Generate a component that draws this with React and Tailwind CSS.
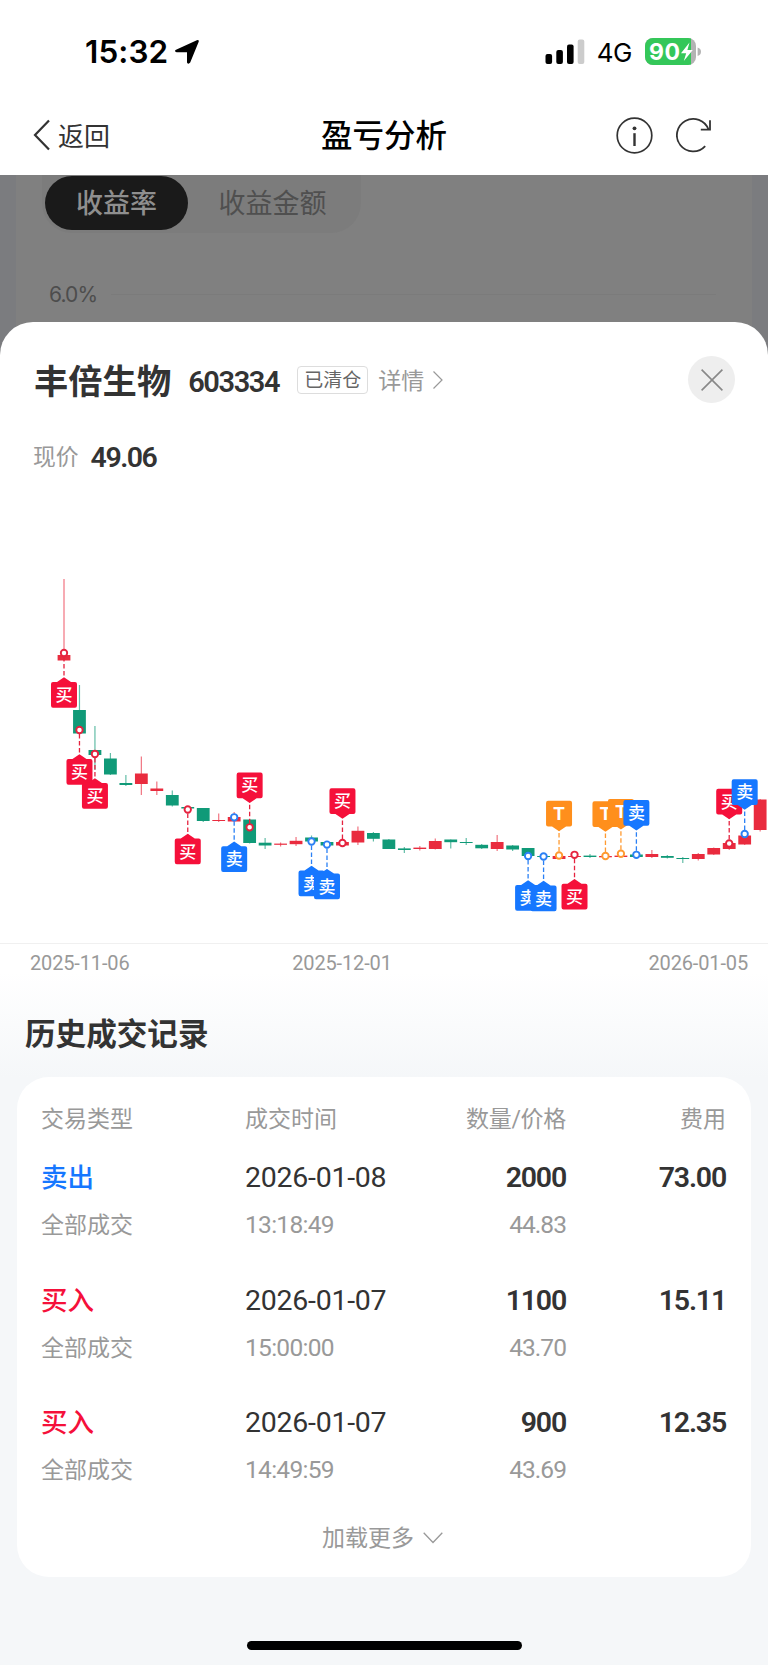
const RED = "#e92b3e";
const GREEN = "#109a78";

const STEP = 15.47;
const candleX = (i) => 64 + i * STEP;

// [color, bodyTop, bodyBottom, high, low]
const CANDLES = [
  ["r", 95, 100.5, 19, 100.5],
  ["g", 150, 173.5, 125, 173.5],
  ["g", 190, 195, 166, 210],
  ["g", 198.5, 214.5, 193, 215],
  ["g", 223, 225, 215, 226],
  ["r", 213.5, 224, 196.5, 235],
  ["r", 228.5, 231, 221.5, 235],
  ["g", 235, 245.5, 230.5, 246.5],
  ["g", 247, 248.5, 247, 249],
  ["g", 248, 261, 248, 262],
  ["r", 260, 261, 253.5, 262],
  ["r", 257, 261.5, 252, 261.5],
  ["g", 259.5, 283, 259, 283.5],
  ["g", 282.7, 285.5, 278, 289],
  ["r", 283.6, 284.8, 282.5, 286.5],
  ["r", 280.8, 284.2, 277, 286],
  ["g", 277.5, 281.5, 275.5, 282],
  ["g", 282, 285.5, 281, 286],
  ["r", 282, 285.5, 281, 286],
  ["r", 270.8, 282.5, 266.5, 285],
  ["g", 273, 278.8, 272, 281.5],
  ["g", 279.5, 289, 279, 289],
  ["g", 288.4, 290, 287, 293],
  ["r", 287.6, 289, 286, 290.5],
  ["r", 281, 289, 278.5, 289.5],
  ["g", 279.5, 282.2, 279.5, 288.5],
  ["g", 282, 283, 278, 285],
  ["g", 284.8, 288.3, 284, 289],
  ["r", 282, 289, 275, 291],
  ["g", 285.5, 289.5, 285, 291],
  ["g", 288, 296, 288, 296],
  ["g", 296, 297, 295, 298],
  ["r", 296, 299, 295, 299],
  ["r", 296, 297, 295, 298],
  ["g", 295.6, 297, 294, 298],
  ["r", 296, 297.3, 295, 298],
  ["r", 295.6, 297, 294, 298],
  ["g", 294.5, 297, 294, 298],
  ["r", 294, 297, 290, 298],
  ["g", 296, 297.8, 295, 298.5],
  ["g", 298, 299, 297, 303],
  ["r", 294, 299, 293, 300.5],
  ["r", 288, 294.5, 287.5, 295],
  ["r", 283, 289, 282.5, 290],
  ["r", 275.5, 284.5, 275, 285],
  ["r", 239.5, 270, 239, 271.5],
];

const MARKS = {
  buy: { label: "买", fill: "#f5103a", line: "#e5233f" },
  sell: { label: "卖", fill: "#1677ff", line: "#2b80f5" },
  t: { label: "T", fill: "#ff8f1c", line: "#ff9a30" },
};

const TRADES = [
  { i: 0, y: 93, type: "buy" },
  { i: 1, y: 170, type: "buy" },
  { i: 2, y: 194, type: "buy" },
  { i: 8, y: 249.5, type: "buy" },
  { i: 11, y: 257.3, type: "sell" },
  { i: 12, y: 267.3, type: "buy", up: true },
  { i: 16, y: 281.5, type: "sell" },
  { i: 17, y: 284.6, type: "sell" },
  { i: 18, y: 283, type: "buy", up: true },
  { i: 30, y: 296, type: "sell" },
  { i: 31, y: 296.5, type: "sell" },
  { i: 32, y: 295.5, type: "t", up: true },
  { i: 33, y: 294.8, type: "buy" },
  { i: 35, y: 296, type: "t", up: true },
  { i: 36, y: 293.7, type: "t", up: true },
  { i: 37, y: 294.8, type: "sell", up: true },
  { i: 43, y: 283.5, type: "buy", up: true },
  { i: 44, y: 274, type: "sell", up: true },
];

const RECORDS = [
  { side: "sell", name: "卖出", date: "2026-01-08", time: "13:18:49", qty: "2000", price: "44.83", fee: "73.00" },
  { side: "buy", name: "买入", date: "2026-01-07", time: "15:00:00", qty: "1100", price: "43.70", fee: "15.11" },
  { side: "buy", name: "买入", date: "2026-01-07", time: "14:49:59", qty: "900", price: "43.69", fee: "12.35" },
];

function StatusBar() {
  return (
    <div className="flex h-[95px] items-center justify-between pl-[85px] pr-[67px] pt-[9px]">
      <div className="flex items-center gap-[6px]">
        <span className="font-['Inter',sans-serif] text-[31.5px] font-semibold leading-none tracking-[0.1px]">15:32</span>
        <svg width="26" height="26" viewBox="0 0 26 26">
          <path d="M2 10.8 22.8 1.2Q25.4.4 24.6 3L16.2 23.6Q14.3 26 13 23.4V13.2H2.6Q-.2 12.2 2 10.8Z" fill="#000" />
        </svg>
      </div>
      <div className="flex items-center">
        <svg width="40" height="26" viewBox="0 0 40 26">
          <rect x="0.5" y="15" width="6.6" height="10" rx="2" />
          <rect x="11.3" y="11" width="6.6" height="14" rx="2" />
          <rect x="22" y="5.6" width="6.6" height="19.4" rx="2" />
          <rect x="32.7" y="0.4" width="6.6" height="24.6" rx="2" fill="#cccccc" />
        </svg>
        <span className="ml-[12px] mt-[2px] font-['Inter',sans-serif] text-[26px] leading-none tracking-[-0.5px]">4G</span>
        <svg className="ml-[13px]" width="56" height="28" viewBox="0 0 56 28">
          <defs>
            <clipPath id="battery">
              <rect width="51" height="27" rx="8" />
            </clipPath>
          </defs>
          <g clipPath="url(#battery)">
            <rect width="51" height="27" fill="#b3b3b3" />
            <rect width="46" height="27" fill="#34c759" />
          </g>
          <path d="M52.6 9.5Q56 10.5 56 13.8T52.6 18Z" fill="#b3b3b3" />
          <text x="4" y="22" fontSize="23" fontWeight="700" fill="#fff" fontFamily="Inter, sans-serif" textLength="31">90</text>
          <path d="M44.5 4.5 36 15.3H41.2L38.8 23 47.8 12H42.4Z" fill="#fff" />
        </svg>
      </div>
    </div>
  );
}

function NavBar() {
  return (
    <div className="grid h-20 grid-cols-3 items-center pl-[33px] pr-[56px] text-[#333]">
      <div className="flex items-center gap-[7px]">
        <svg width="18" height="32" viewBox="0 0 18 32" fill="none" stroke="#333" strokeWidth="2.2">
          <path d="M16 1.5 2 16 16 30.5" />
        </svg>
        <span className="pt-[3px] text-[26px] leading-none">返回</span>
      </div>
      <h1 className="-mr-[23px] pt-[4px] text-center text-[31.5px] font-medium leading-none text-black">盈亏分析</h1>
      <div className="flex items-center justify-end gap-[23px]">
        <svg width="37" height="37" viewBox="0 0 37 37" fill="none" stroke="#333">
          <circle cx="18.5" cy="18.5" r="17.3" strokeWidth="1.7" />
          <circle cx="18.5" cy="11.3" r="1.9" fill="#333" stroke="none" />
          <path d="M18.5 16.2V29" strokeWidth="2.4" />
        </svg>
        <svg width="36" height="37" viewBox="0 0 36 37" fill="none" stroke="#333" strokeWidth="1.8">
          <path d="M29.2 29.2A16.3 16.3 0 1 1 32.5 12.5" />
          <path d="M34 3.3V12.6H24.8" />
        </svg>
      </div>
    </div>
  );
}

function Backdrop() {
  return (
    <div className="h-[187px] bg-[#7b7c7f] px-4">
      <div className="h-full bg-[#808080] px-[26px]">
        <div className="flex h-[58px] w-[319px] rounded-b-[30px] bg-[#7c7c7c] pb-[4px] pl-[3px] pt-[1px]">
          <div className="flex h-[54px] w-[143px] items-center justify-center rounded-full bg-[#1a1a1a] pt-[3px] text-[27px] font-medium text-[#8f8f8f]">
            收益率
          </div>
          <div className="flex h-[54px] w-[169px] items-center justify-center pt-[3px] text-[27px] text-[#4f4f4f]">收益金额</div>
        </div>
        <div className="mt-[50px] flex items-center pl-[7px] pr-[10px]">
          <span className="w-[62px] pt-px font-['Inter',sans-serif] text-[21px] leading-[22px] tracking-[-0.9px] text-[#4d4d4d]">6.0%</span>
          <div className="mb-[1px] h-px flex-1 bg-[#7b7b7b]" />
        </div>
      </div>
    </div>
  );
}

function TradeMark({ i, y, type, up }) {
  const mark = MARKS[type];
  const s = up ? -1 : 1;
  return (
    <g transform={`translate(${candleX(i)} ${y})`}>
      <line y1={s * 4} y2={s * 26} stroke={mark.line} strokeWidth="1.3" strokeDasharray="4.5 2.5" />
      <path
        transform={`scale(1 ${s})`}
        d="M0 24.3 7 29H11Q13 29 13 31V52.5Q13 54.7 11 54.7H-11Q-13 54.7-13 52.5V31Q-13 29-11 29H-7Z"
        fill={mark.fill}
      />
      <text
        y={s * 42 + 6}
        textAnchor="middle"
        fontSize={type === "t" ? 18.5 : 17}
        fontWeight={type === "t" ? 700 : 500}
        fill="#fff"
      >
        {mark.label}
      </text>
      <circle r="3.2" fill="#fff" stroke={mark.line} strokeWidth="1.9" />
    </g>
  );
}

function KlineChart() {
  return (
    <svg className="block" width="768" height="383" viewBox="0 0 768 383">
      {CANDLES.map(([c, top, bottom, high, low], i) => {
        const color = c === "r" ? RED : GREEN;
        return (
          <g key={i} fill={color}>
            <rect x={candleX(i) - 0.6} y={high} width="1.2" height={low - high} opacity="0.65" />
            <rect x={candleX(i) - 6.4} y={top} width="12.8" height={bottom - top} />
          </g>
        );
      })}
      {TRADES.map((t) => (
        <TradeMark key={t.i} {...t} />
      ))}
    </svg>
  );
}

function SheetHeader() {
  return (
    <div className="pl-[34px] pr-[33px] pt-[34px]">
      <div className="flex h-[47px] items-center">
        <h2 className="pt-[5px] text-[34.3px] font-bold leading-none">丰倍生物</h2>
        <span className="ml-[17px] mt-[5px] text-[29px] font-semibold leading-none tracking-[-1.4px]">603334</span>
        <span className="ml-[18px] flex h-[28px] w-[71px] items-center justify-center rounded-[4px] border border-[#ddd] pt-[2px] text-[19px] leading-none text-[#666]">
          已清仓
        </span>
        <span className="ml-[10px] pt-[3px] text-[23px] leading-none text-[#999]">详情</span>
        <svg className="ml-[8px]" width="12" height="20" viewBox="0 0 12 20" fill="none" stroke="#999" strokeWidth="1.2">
          <path d="M1.5 1.5 10 10 1.5 18.5" />
        </svg>
        <button className="ml-auto flex h-[47px] w-[47px] items-center justify-center rounded-full bg-[#eee]">
          <svg width="22" height="22" viewBox="0 0 22 22" stroke="#888" strokeWidth="1.6">
            <path d="M.6.6 21.4 21.4M21.4.6.6 21.4" />
          </svg>
        </button>
      </div>
      <div className="-ml-px mt-[39px] flex h-[32px] items-center">
        <span className="pt-[1px] text-[22.8px] leading-none text-[#999]">现价</span>
        <span className="ml-[12px] text-[28.5px] font-semibold leading-none tracking-[-1.5px]">49.06</span>
      </div>
    </div>
  );
}

function RecordRow({ record }) {
  return (
    <div className="grid h-[122.7px] grid-cols-[205px_200px_120px_1fr] content-start">
      <span className={`text-[26.5px] font-medium leading-[48px] ${record.side === "sell" ? "text-[#1677ff]" : "text-[#f5103a]"}`}>
        {record.name}
      </span>
      <span className="-ml-px text-[28.5px] leading-[48px] tracking-[-0.25px]">{record.date}</span>
      <span className="text-right text-[28.5px] font-semibold leading-[48px] tracking-[-1.2px]">{record.qty}</span>
      <span className="text-right text-[28.5px] font-semibold leading-[48px] tracking-[-1.2px]">{record.fee}</span>
      <span className="text-[23px] leading-[47px] text-[#999]">全部成交</span>
      <span className="-ml-px text-[24.5px] leading-[46px] tracking-[-0.7px] text-[#999]">{record.time}</span>
      <span className="text-right text-[24.5px] leading-[46px] tracking-[-0.95px] text-[#999]">{record.price}</span>
    </div>
  );
}

function HistoryCard() {
  return (
    <div className="mx-[17px] h-[500px] rounded-[32px] bg-white pl-6 pr-[25px] pt-[21px]">
      <div className="grid h-[56px] grid-cols-[205px_200px_120px_1fr] text-[23px] leading-[44px] text-[#999]">
        <span>交易类型</span>
        <span className="-ml-px">成交时间</span>
        <span className="whitespace-nowrap text-right tracking-[-0.3px]">数量/价格</span>
        <span className="text-right">费用</span>
      </div>
      {RECORDS.map((r, i) => (
        <RecordRow key={i} record={r} />
      ))}
      <div className="-mt-[5px] flex items-center justify-center gap-[9px] pr-[2px] text-[23px] leading-[44px] text-[#999]">
        加载更多
        <svg className="-mt-[2px]" width="20" height="12" viewBox="0 0 20 12" fill="none" stroke="#999" strokeWidth="1.3">
          <path d="M.7.8 10 10.5 19.3.8" />
        </svg>
      </div>
    </div>
  );
}

export default function App() {
  return (
    <div lang="zh-CN" className="h-[1665px] w-[768px] overflow-hidden bg-white font-['Roboto','Noto_Sans_CJK_SC',sans-serif] text-[#333]">
      <div className="text-black">
        <StatusBar />
        <NavBar />
      </div>
      <Backdrop />

      {/* Bottom sheet */}
      <div className="relative -mt-[40px] h-[1343px] rounded-t-[33px] bg-[linear-gradient(180deg,#fff_0px,#fff_650px,#f5f7f9_755px)]">
        <SheetHeader />
        <div className="mt-[86px]">
          <KlineChart />
        </div>
        <div className="flex h-[40px] items-center justify-between border-t border-[#f0f0f0] pb-[2px] pl-[30px] pr-[20px] text-[20px] tracking-[-0.15px] text-[#999]">
          <span>2025-11-06</span>
          <span className="mr-[94px]">2025-12-01</span>
          <span>2026-01-05</span>
        </div>
        <h3 className="flex h-[94px] items-center pl-[25px] pt-[9px] text-[30.6px] font-bold">历史成交记录</h3>
        <HistoryCard />
        <div className="mx-auto mt-[64px] h-[9px] w-[275px] rounded-full bg-black" />
      </div>
    </div>
  );
}
